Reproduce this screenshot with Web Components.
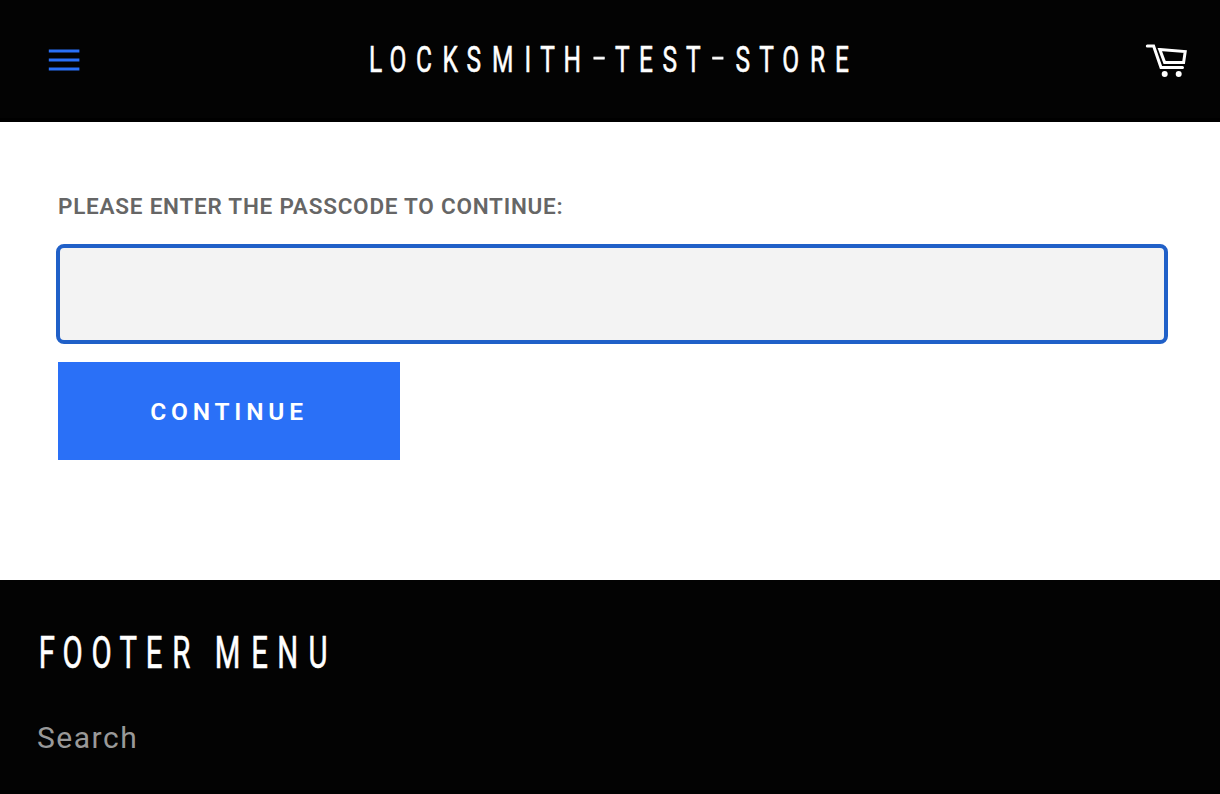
<!DOCTYPE html>
<html lang="en">
<head>
<meta charset="utf-8">
<title>locksmith-test-store</title>
<style>
html,body{margin:0;padding:0}
body{background:#fff;font-family:Roboto,"Liberation Sans",sans-serif}
</style>
</head>
<body>
<store-page></store-page>
<script>
const define = (name, html) => customElements.define(name, class extends HTMLElement {
  constructor() {
    super();
    this.attachShadow({mode: 'open'}).innerHTML = html;
  }
});

// Condensed display lettering: each letter is centred on its own optical position.
customElements.define('display-text', class extends HTMLElement {
  connectedCallback() {
    const a = n => this.getAttribute(n);
    const k = 0.67;
    const base = +a('baseline');
    const xs = a('centers').split(' ').map(v => ((v - 0.6) / k).toFixed(2)).join(' ');
    const text = a('text').replace(/-/g, `<tspan class="dash" y="${base + 8.3}">-</tspan>`)
      .replace(/<\/tspan>(.)/g, `</tspan><tspan y="${base}">$1</tspan>`);
    this.attachShadow({mode: 'open'}).innerHTML = `
      <style>
        :host{display:block}
        svg{display:block;overflow:visible}
        text{font-family:Roboto,sans-serif;font-weight:400;text-anchor:middle;fill:#fff;stroke:#fff;stroke-width:.6px;font-kerning:none}
        .dash{font-size:68px;font-weight:100;stroke-width:.8px}
      </style>
      <svg width="${a('width')}" height="${a('height')}"><text transform="scale(${k} 1)" x="${xs}" y="${base}" font-size="${a('size')}">${text}</text></svg>`;
  }
});

define('menu-button', `
  <style>:host{display:block;width:32px;height:24px}svg{display:block}</style>
  <svg width="32" height="24" viewBox="0 0 32 24" stroke="#2a70f7" stroke-width="3" fill="none" role="img" aria-label="Menu">
    <path d="M.8 3h30.6M.8 12h30.6M.8 21.1h30.6"/>
  </svg>`);

define('cart-button', `
  <style>:host{display:block;width:44px;height:36px}svg{display:block}</style>
  <svg width="44" height="36" viewBox="0 0 44 36" fill="none" stroke="#fff" stroke-width="3" stroke-linecap="round" stroke-linejoin="miter" role="img" aria-label="Cart">
    <path d="M3.3 4H9.6L17 25.6H38.5"/>
    <path d="M15.8 7.6L41.2 9.6L39.6 20.4H20.6Z"/>
    <g fill="#fff" stroke="none"><circle cx="20.7" cy="32.1" r="3"/><circle cx="34.7" cy="32.1" r="3"/></g>
  </svg>`);

define('store-header', `
  <style>
    :host{display:grid;grid-template-columns:320px 486px 1fr;box-sizing:border-box;height:122px;background:#030303;border-bottom:4px solid #000;padding:0 32px 0 48px}
    menu-button{margin-top:48px}
    display-text{margin-top:40px}
    cart-button{margin-top:42px;justify-self:end}
  </style>
  <menu-button></menu-button>
  <display-text text="LOCKSMITH-TEST-STORE" width="486" height="40" baseline="32" size="36.6"
    centers="8.2 30.5 56.7 82.7 106.3 135.2 160.5 180.2 204.8 231.8 255 278.7 302.3 326 350.5 375.5 399.3 423.2 450.2 474.5"></display-text>
  <cart-button></cart-button>`);

define('passcode-form', `
  <style>
    :host{display:block;box-sizing:border-box;height:458px;padding:70px 54px 0 58px}
    form{display:flex;flex-direction:column;align-items:flex-start;margin:0}
    label{font-size:22.5px;line-height:28px;font-weight:600;letter-spacing:.76px;color:#666;white-space:nowrap}
    input{box-sizing:border-box;width:1112px;height:100px;margin:24px 0 0 -2px;padding:0 30px;border:4px solid #2060c8;border-radius:8px;background:#f3f3f3;outline:0;font:30px Roboto,sans-serif}
    button{width:342px;height:98px;margin:18px 0 0;padding:2px 0 0;border:0;background:#2a70f7;color:#fff;font:600 24.5px/96px Roboto,sans-serif;letter-spacing:4.8px}
  </style>
  <form>
    <label for="code">PLEASE ENTER THE PASSCODE TO CONTINUE:</label>
    <input id="code" type="password">
    <button type="button">CONTINUE</button>
  </form>`);

define('store-footer', `
  <style>
    :host{display:block;box-sizing:border-box;height:214px;padding:48px 37px 0;background:#030303;border-bottom:4px solid #000}
    a{display:block;width:max-content;margin-top:42px;font-size:30px;line-height:36px;letter-spacing:1.5px;color:#999;text-decoration:none}
  </style>
  <display-text text="FOOTER MENU" width="300" height="50" baseline="40.1" size="43.8"
    centers="10.5 36.2 65.3 91.8 117.8 145 168 191.2 223.3 251.3 281.5"></display-text>
  <a>Search</a>`);

define('store-page', `
  <style>:host{display:flex;flex-direction:column;width:1220px;height:794px;overflow:hidden}</style>
  <store-header></store-header>
  <passcode-form></passcode-form>
  <store-footer></store-footer>`);
</script>
</body>
</html>
